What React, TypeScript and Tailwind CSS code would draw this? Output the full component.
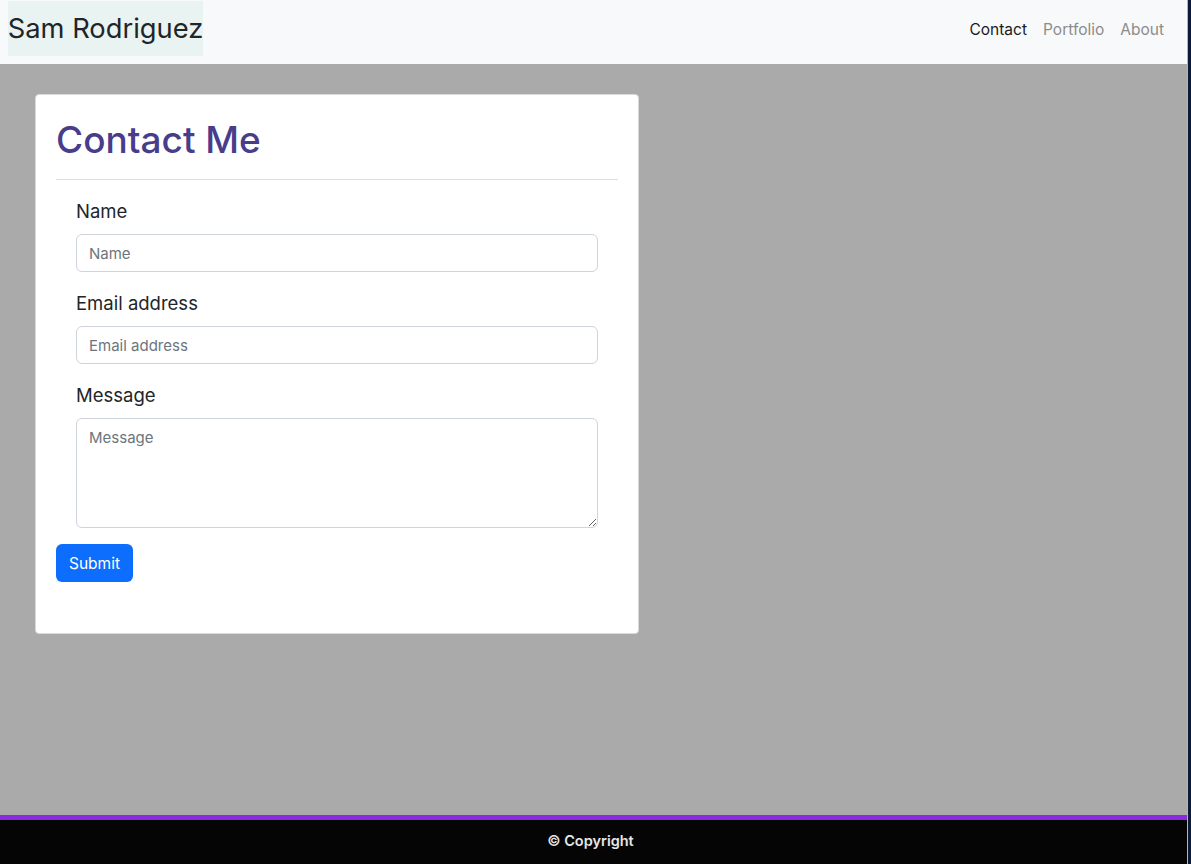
import React from "react";

export default function App() {
  return (
    <div className="flex h-[864px] w-[1191px] overflow-hidden bg-[#0b1a38]" style={{ fontFamily: "Inter, 'Liberation Sans', sans-serif" }}>
      <div className="flex w-[1187px] flex-col">
        <nav className="flex h-[64px] items-start justify-between bg-[#f8f9fa]">
          <div className="ml-[8px] mt-[1px] flex h-[55px] w-[195px] items-center justify-center whitespace-nowrap bg-[#e9f3f1] pt-[1px] text-[27.3px] text-[#212529]">
            Sam Rodriguez
          </div>
          <div className="mr-[23px] flex h-[60px] items-center gap-[16px] text-[15.5px]">
            <span className="text-[#1a1a1a]">Contact</span>
            <span className="text-[#8c8c8c]">Portfolio</span>
            <span className="text-[#8c8c8c]">About</span>
          </div>
        </nav>
        <main className="flex-1 bg-[#aaaaaa] pl-[35px] pt-[30px]">
          <div className="h-[540px] w-[604px] rounded-[4px] border border-[#d9d9d9] bg-white px-[20px] pt-[21px]">
            <h1 className="text-[37px] font-medium leading-[48px] text-[#483d8b]">Contact Me</h1>
            <hr className="mt-[15px] border-t border-[#dedede]" />
            <form className="px-[20px] pt-[16px]">
              <label className="block text-[18.5px] leading-[30px] text-[#212529]">Name</label>
              <input
                className="mt-[8px] block h-[38px] w-full rounded-[6px] border border-[#ced4da] px-[12px] text-[15px] text-[#212529] placeholder:text-[#6c757d] outline-none"
                placeholder="Name"
              />
              <label className="mt-[16px] block text-[18.5px] leading-[30px] text-[#212529]">Email address</label>
              <input
                className="mt-[8px] block h-[38px] w-full rounded-[6px] border border-[#ced4da] px-[12px] text-[15px] text-[#212529] placeholder:text-[#6c757d] outline-none"
                placeholder="Email address"
              />
              <label className="mt-[16px] block text-[18.5px] leading-[30px] text-[#212529]">Message</label>
              <textarea
                className="mt-[8px] block h-[110px] w-full rounded-[6px] border border-[#ced4da] px-[12px] py-[7px] text-[15px] leading-[24px] text-[#212529] placeholder:text-[#6c757d] outline-none"
                placeholder="Message"
              />
            </form>
            <button className="mt-[16px] h-[38px] rounded-[6px] bg-[#0d6efd] px-[13px] pt-[1px] text-[15.5px] text-white">
              Submit
            </button>
          </div>
        </main>
        <footer className="border-t-[5px] border-[#8a2be2] bg-[#050505]">
          <div className="flex h-[44px] items-center justify-center pr-[6px] pb-[2px] text-[14.5px] font-semibold text-[#e6e6e6]">
            © Copyright
          </div>
        </footer>
      </div>
      <div className="w-[1px] bg-[#b5b5b5]" />
    </div>
  );
}
